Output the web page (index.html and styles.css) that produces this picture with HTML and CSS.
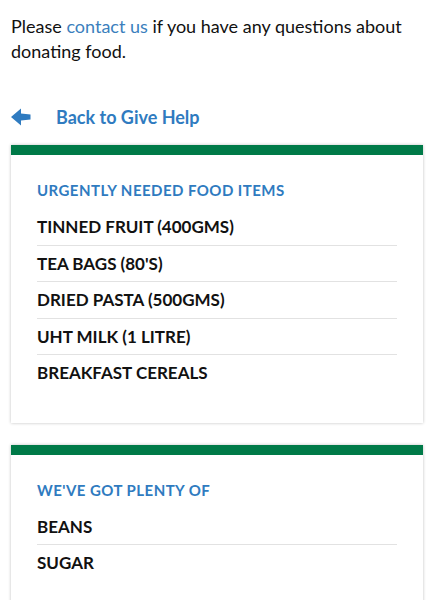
FILE: index.html
```html
<!DOCTYPE html>
<html lang="en">
<head>
    <meta charset="UTF-8">
    <meta name="viewport" content="width=device-width, initial-scale=1.0">
    <title>Donate Food</title>
    <link rel="stylesheet" href="styles.css">
</head>
<body>
    <div class="container">
        <p class="intro">Please <a href="#" class="text-link">contact us</a> if you have any questions about donating food.</p>

        <a href="#" class="back-link">
            <svg class="back-icon" width="20" height="18" viewBox="0 0 20 18" aria-hidden="true">
                <path d="M0 9 L10 0.5 L10 5.5 L19.5 6.5 L19.5 11.5 L10 12.5 L10 17.5 Z" fill="currentColor"/>
            </svg>
            <span>Back to Give Help</span>
        </a>

        <section class="card">
            <h2 class="card-title">Urgently needed food items</h2>
            <ul class="item-list">
                <li>Tinned fruit (400gms)</li>
                <li>Tea bags (80's)</li>
                <li>Dried pasta (500gms)</li>
                <li>UHT milk (1 litre)</li>
                <li>Breakfast cereals</li>
            </ul>
        </section>

        <section class="card">
            <h2 class="card-title">We've got plenty of</h2>
            <ul class="item-list">
                <li>Beans</li>
                <li>Sugar</li>
            </ul>
        </section>
    </div>
</body>
</html>
```

FILE: styles.css
```css
:root {
    --blue: #2f7bc0;
    --link-blue: #3b7fbd;
    --green: #007a48;
    --text-color: #111;
}
body {
    font-family: Lato, "Liberation Sans", sans-serif;
    color: var(--text-color);
    background: #fff;
    margin: 0;
    padding: 0;
}
.container {
    padding: 0 10px 0 11px;
}
.intro {
    font-size: 18px;
    line-height: 25px;
    margin: 14px 0 0;
}
.text-link {
    color: var(--link-blue);
    text-decoration: none;
}
.back-link {
    display: flex;
    align-items: center;
    gap: 25px;
    margin-top: 41px;
    color: var(--blue);
    font-weight: 700;
    font-size: 18px;
    line-height: 24px;
    text-decoration: none;
}
.back-icon {
    display: block;
}
.card {
    background: #fff;
    border-top: 10px solid var(--green);
    box-shadow: 0 0 3px rgba(0, 0, 0, 0.25);
    padding: 26px 26px 32px;
    margin-top: 16px;
    margin-bottom: 22px;
}
.card + .card {
    margin-top: 0;
}
.card-title {
    color: var(--blue);
    font-size: 15px;
    font-weight: 700;
    text-transform: uppercase;
    letter-spacing: 0.45px;
    line-height: 18px;
    margin: 0 0 10px;
}
.item-list {
    list-style: none;
    margin: 0;
    padding: 0;
}
.item-list li {
    font-size: 17px;
    font-weight: 700;
    text-transform: uppercase;
    line-height: 35.5px;
    border-bottom: 1px solid #e2e2e2;
}
.item-list li:last-child {
    border-bottom: none;
}
```
